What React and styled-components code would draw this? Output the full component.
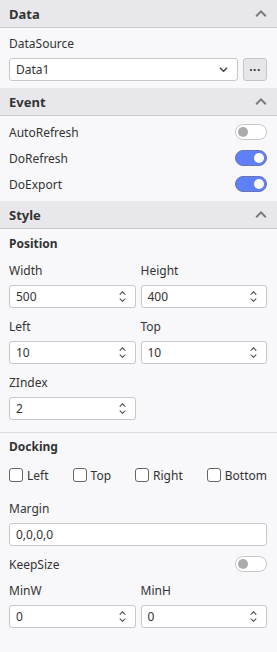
import React from "react";
import styled, { createGlobalStyle } from "styled-components";

const GlobalStyle = createGlobalStyle`
  html, body { margin: 0; padding: 0; background: #f8f8fa; }
  body {
    font-family: "Noto Sans", "Open Sans", sans-serif;
    font-size: 12px;
    color: #333;
  }
  * { box-sizing: border-box; }
`;

const Panel = styled.div`
  width: 277px;
  min-height: 652px;
  background: #f8f8fa;
`;

const Header = styled.div`
  height: 28px;
  display: flex;
  align-items: center;
  justify-content: space-between;
  padding: 0 10px 0 9px;
  background: #e8e8ec;
  border-bottom: 1px solid #cacace;
  font-weight: 700;
  font-size: 13px;
  color: #333;
`;

const Body = styled.div`
  padding: ${p => p.$pad || "8px 10px 7px 9px"};
`;

const Label = styled.div`
  height: 16px;
  line-height: 16px;
  margin-bottom: ${p => p.$mb ?? 6}px;
  white-space: nowrap;
`;

const SubTitle = styled.div`
  height: 16px;
  line-height: 16px;
  font-weight: 700;
  margin-bottom: ${p => p.$mb ?? 11}px;
`;

const Line = styled.div`
  display: flex;
  gap: 5px;
`;

const Field = styled.div`
  flex: 1;
  height: 23px;
  display: flex;
  align-items: center;
  justify-content: space-between;
  padding: 0 9px 0 6px;
  background: #fff;
  border: 1px solid #c8c8cc;
  border-radius: 3px;
  color: #333;
`;

const DotsButton = styled.div`
  width: 24px;
  height: 23px;
  display: flex;
  align-items: center;
  justify-content: center;
  background: #e6e6ea;
  border: 1px solid #c6c6ca;
  border-radius: 3px;
  font-weight: 700;
  letter-spacing: 0.5px;
  color: #333;
`;

const SwitchRow = styled.div`
  height: 26px;
  margin-top: ${p => p.$mt || 0}px;
  display: flex;
  align-items: center;
  justify-content: space-between;
`;

const Track = styled.div`
  width: 32px;
  height: 16px;
  border-radius: 8px;
  padding: 2px;
  display: flex;
  justify-content: ${p => (p.$on ? "flex-end" : "flex-start")};
  align-items: center;
  background: ${p => (p.$on ? "#6080f8" : "#fff")};
  border: 1px solid ${p => (p.$on ? "#6a74b8" : "#c8c8c8")};
`;

const Knob = styled.div`
  width: 10px;
  height: 10px;
  border-radius: 50%;
  background: ${p => (p.$on ? "#fff" : "#ababab")};
`;

const Grid = styled.div`
  display: grid;
  grid-template-columns: 1fr 1fr;
  column-gap: 5px;
  row-gap: 11px;
  margin-top: ${p => p.$mt || 0}px;
`;

const Divider = styled.div`
  height: 1px;
  background: #dcdce0;
  margin: 12px 0 0;
`;

const Checks = styled.div`
  display: flex;
  justify-content: space-between;
  align-items: center;
  height: 18px;
  margin-bottom: 17px;
`;

const CheckItem = styled.label`
  display: flex;
  align-items: center;
  gap: 4px;
`;

const Box = styled.span`
  width: 14px;
  height: 14px;
  border: 1px solid #666;
  border-radius: 3px;
  background: #fff;
`;

const Chevron = ({ up, size = 10, color = "#777" }) => (
  <svg width={size} height={size * 0.6} viewBox="0 0 10 6">
    <path
      d={up ? "M1 5.2 L5 1.2 L9 5.2" : "M1 0.8 L5 4.8 L9 0.8"}
      fill="none"
      stroke={color}
      strokeWidth="1.6"
    />
  </svg>
);

const SpinWrap = styled.div`
  display: flex;
  flex-direction: column;
  gap: 3px;
`;

const Spin = () => (
  <SpinWrap>
    <Chevron up size={7} color="#555" />
    <Chevron size={7} color="#555" />
  </SpinWrap>
);

const NumberBox = ({ label, value }) => (
  <div>
    <Label>{label}</Label>
    <Field>
      <span>{value}</span>
      <Spin />
    </Field>
  </div>
);

const Switch = ({ label, on, mt }) => (
  <SwitchRow $mt={mt}>
    <span>{label}</span>
    <Track $on={on}>
      <Knob $on={on} />
    </Track>
  </SwitchRow>
);

export default function App() {
  return (
    <Panel>
      <GlobalStyle />
      <Header>
        Data
        <Chevron up size={12} />
      </Header>
      <Body>
        <Label>DataSource</Label>
        <Line>
          <Field>
            <span>Data1</span>
            <Chevron size={9} color="#444" />
          </Field>
          <DotsButton>···</DotsButton>
        </Line>
      </Body>

      <Header>
        Event
        <Chevron up size={12} />
      </Header>
      <Body $pad="3px 10px 4px 9px">
        <Switch label="AutoRefresh" />
        <Switch label="DoRefresh" on />
        <Switch label="DoExport" on />
      </Body>

      <Header>
        Style
        <Chevron up size={12} />
      </Header>
      <Body $pad="7px 10px 0 9px">
        <SubTitle>Position</SubTitle>
        <Grid>
          <NumberBox label="Width" value="500" />
          <NumberBox label="Height" value="400" />
          <NumberBox label="Left" value="10" />
          <NumberBox label="Top" value="10" />
          <NumberBox label="ZIndex" value="2" />
        </Grid>
      </Body>
      <Divider />
      <Body $pad="6px 10px 0 9px">
        <SubTitle>Docking</SubTitle>
        <Checks>
          <CheckItem><Box />Left</CheckItem>
          <CheckItem><Box />Top</CheckItem>
          <CheckItem><Box />Right</CheckItem>
          <CheckItem><Box />Bottom</CheckItem>
        </Checks>
        <Label>Margin</Label>
        <Field>
          <span>0,0,0,0</span>
        </Field>
        <Switch label="KeepSize" mt={5} />
        <Grid $mt={6}>
          <NumberBox label="MinW" value="0" />
          <NumberBox label="MinH" value="0" />
        </Grid>
      </Body>
    </Panel>
  );
}
